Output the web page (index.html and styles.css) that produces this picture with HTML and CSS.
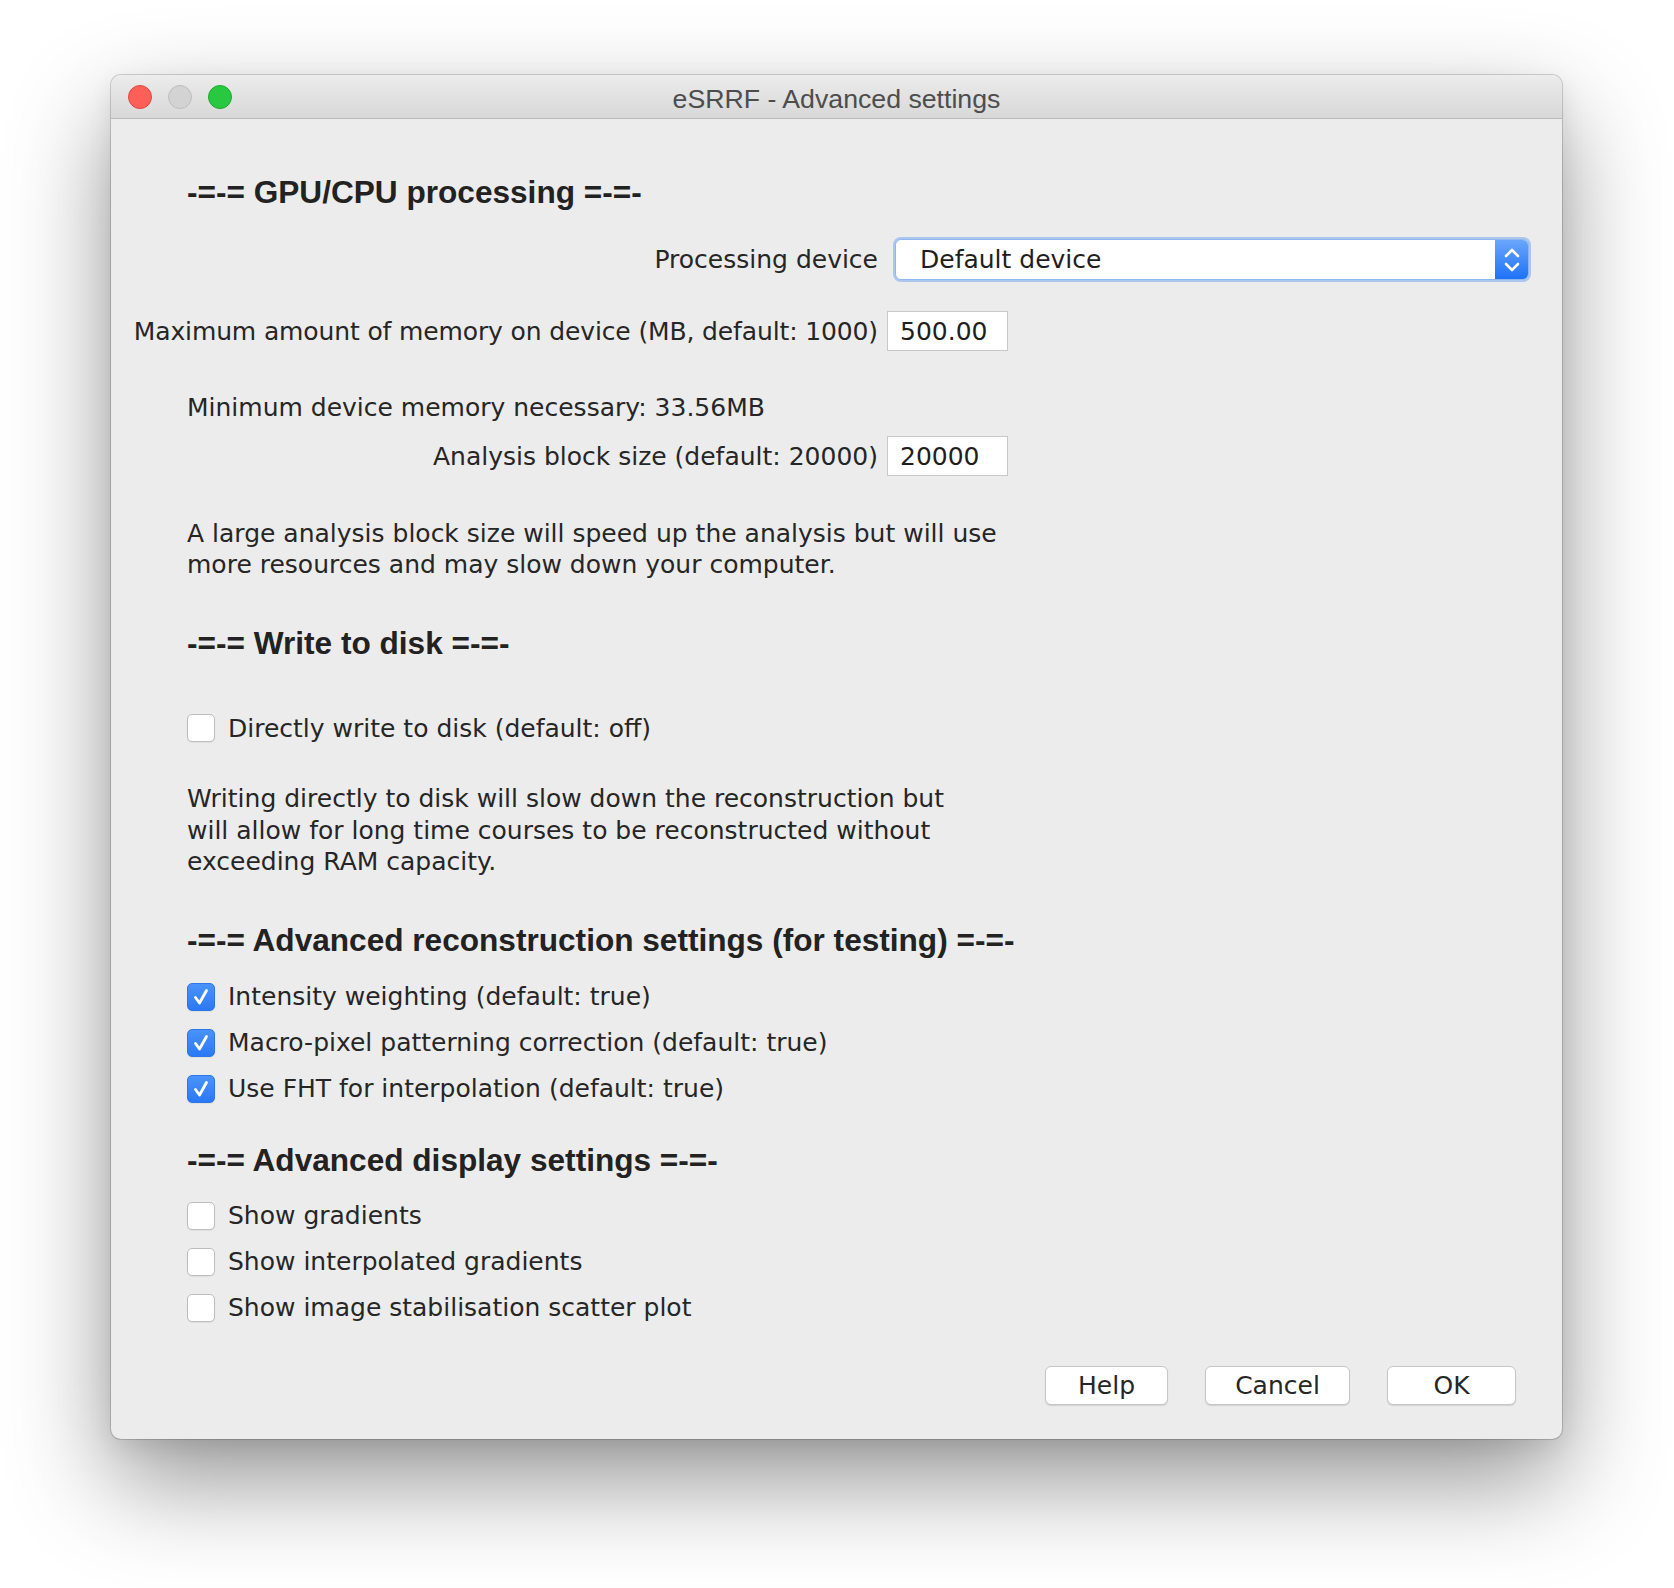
FILE: index.html
```html
<!DOCTYPE html>
<html>
<head>
<meta charset="utf-8">
<title>eSRRF - Advanced settings</title>
<link rel="stylesheet" href="styles.css">
</head>
<body>
<div class="page">
  <div class="window">
    <div class="titlebar">
      <div class="lights">
        <span class="light red"></span>
        <span class="light gray"></span>
        <span class="light green"></span>
      </div>
      <div class="title">eSRRF - Advanced settings</div>
    </div>
    <div class="content">
      <div class="heading h-gpu indent">-=-= GPU/CPU processing =-=-</div>

      <div class="form-row row-device">
        <div class="label"><span>Processing device</span></div>
        <div class="select">
          <span class="select-text">Default device</span>
          <span class="stepper">
            <svg width="20" height="30" viewBox="0 0 20 30">
              <path d="M4 11 L10 5 L16 11" fill="none" stroke="#fff" stroke-width="2.6" stroke-linecap="round" stroke-linejoin="round"/>
              <path d="M4 19 L10 25 L16 19" fill="none" stroke="#fff" stroke-width="2.6" stroke-linecap="round" stroke-linejoin="round"/>
            </svg>
          </span>
        </div>
      </div>

      <div class="form-row row-mem">
        <div class="label label-tight"><span>Maximum amount of memory on device (MB, default: 1000)</span></div>
        <div class="field">500.00</div>
      </div>

      <div class="text indent row-min">Minimum device memory necessary: 33.56MB</div>

      <div class="form-row row-block">
        <div class="label"><span>Analysis block size (default: 20000)</span></div>
        <div class="field">20000</div>
      </div>

      <p class="para indent para-block">A large analysis block size will speed up the analysis but will use<br>more resources and may slow down your computer.</p>

      <div class="heading h-disk indent">-=-= Write to disk =-=-</div>

      <label class="check indent check-disk"><span class="box"></span><span>Directly write to disk (default: off)</span></label>

      <p class="para indent para-disk">Writing directly to disk will slow down the reconstruction but<br>will allow for long time courses to be reconstructed without<br>exceeding RAM capacity.</p>

      <div class="heading h-recon indent">-=-= Advanced reconstruction settings (for testing) =-=-</div>

      <div class="check-list list-recon indent">
        <label class="check"><span class="box on"><svg width="28" height="28" viewBox="0 0 28 28"><path d="M8.5 14.5 L12.5 20 L19.5 7.5" fill="none" stroke="#fff" stroke-width="2.8" stroke-linecap="round" stroke-linejoin="round"/></svg></span><span>Intensity weighting (default: true)</span></label>
        <label class="check"><span class="box on"><svg width="28" height="28" viewBox="0 0 28 28"><path d="M8.5 14.5 L12.5 20 L19.5 7.5" fill="none" stroke="#fff" stroke-width="2.8" stroke-linecap="round" stroke-linejoin="round"/></svg></span><span>Macro-pixel patterning correction (default: true)</span></label>
        <label class="check"><span class="box on"><svg width="28" height="28" viewBox="0 0 28 28"><path d="M8.5 14.5 L12.5 20 L19.5 7.5" fill="none" stroke="#fff" stroke-width="2.8" stroke-linecap="round" stroke-linejoin="round"/></svg></span><span>Use FHT for interpolation (default: true)</span></label>
      </div>

      <div class="heading h-display indent">-=-= Advanced display settings =-=-</div>

      <div class="check-list list-display indent">
        <label class="check"><span class="box"></span><span>Show gradients</span></label>
        <label class="check"><span class="box"></span><span>Show interpolated gradients</span></label>
        <label class="check"><span class="box"></span><span>Show image stabilisation scatter plot</span></label>
      </div>

      <div class="buttons">
        <button class="btn btn-help">Help</button>
        <button class="btn btn-cancel">Cancel</button>
        <button class="btn btn-ok">OK</button>
      </div>
    </div>
  </div>
</div>
</body>
</html>
```

FILE: styles.css
```css
* { box-sizing: border-box; }

html, body {
  margin: 0;
  padding: 0;
  background: #ffffff;
}

body {
  width: 1674px;
  height: 1588px;
  overflow: hidden;
  font-family: "DejaVu Sans", "Lucida Grande", sans-serif;
  color: #262626;
}

.page {
  padding: 75px 0 0 111px;
}

.window {
  width: 1451px;
  height: 1364px;
  background: #ececec;
  border-radius: 10px;
  box-shadow: 0 0 0 1px rgba(0,0,0,0.16), 0 42px 100px rgba(0,0,0,0.42), 0 8px 24px rgba(0,0,0,0.08);
  overflow: hidden;
  display: flex;
  flex-direction: column;
}

.titlebar {
  height: 44px;
  flex: none;
  position: relative;
  background: linear-gradient(#ececec, #d8d8d8);
  border-bottom: 1px solid #b9b9b9;
  display: flex;
  align-items: center;
  justify-content: center;
}

.lights {
  position: absolute;
  left: 17px;
  top: 10px;
  display: flex;
  gap: 16px;
}

.light {
  width: 24px;
  height: 24px;
  border-radius: 50%;
  display: block;
}
.light.red { background: #fe5f57; border: 1px solid #e2463f; }
.light.gray { background: #d3d3d3; border: 1px solid #bdbdbd; }
.light.green { background: #28c840; border: 1px solid #1aab29; }

.title {
  font-family: "Liberation Sans", Arial, sans-serif;
  font-size: 26.7px;
  color: #4d4d4d;
  line-height: 44px;
  padding-top: 4px;
}

.content {
  flex: 1;
  display: flex;
  flex-direction: column;
  align-items: flex-start;
  padding: 53px 46px 0 23px;
  font-size: 25px;
}

.indent { margin-left: 53px; }

.heading {
  font-family: "Liberation Sans", Arial, sans-serif;
  font-weight: bold;
  font-size: 31.6px;
  line-height: 40px;
  height: 40px;
  color: #222;
  white-space: nowrap;
}

.form-row {
  display: flex;
  align-items: center;
}

.label {
  width: 744px;
  display: flex;
  justify-content: flex-end;
  white-space: nowrap;
  line-height: 32px;
  padding-top: 1px;
}

.label-tight { letter-spacing: -0.13px; }

.row-device { height: 41px; margin-top: 27px; }
.row-mem { height: 40px; margin-top: 31px; }
.row-min { line-height: 32px; height: 32px; margin-top: 40px; padding-top: 1px; }
.row-block { height: 40px; margin-top: 13px; }

.select {
  margin-left: 17px;
  width: 634px;
  height: 41px;
  background: #fff;
  border: 1px solid #8fb7ee;
  box-shadow: 0 0 0 2px rgba(120,170,240,0.55);
  border-radius: 6px;
  display: flex;
  align-items: center;
  overflow: hidden;
}

.select-text {
  flex: 1;
  padding-left: 24px;
  line-height: 32px;
  color: #1e1e1e;
}

.stepper {
  width: 33px;
  height: 100%;
  background: linear-gradient(#6aa6fb, #1f72f7);
  display: flex;
  align-items: center;
  justify-content: center;
}

.field {
  margin-left: 9px;
  width: 121px;
  height: 40px;
  background: #fff;
  border: 1px solid #c9c9c9;
  padding-left: 12px;
  line-height: 38px;
  padding-top: 1px;
  color: #1e1e1e;
}

.para {
  margin-top: 41px;
  margin-bottom: 0;
  line-height: 31px;
  padding-top: 1px;
}

.para-block { margin-top: 41px; }
.h-disk { margin-top: 43px; }

.check {
  display: flex;
  align-items: center;
  gap: 13px;
  height: 32px;
  line-height: 32px;
  padding-top: 1px;
}

.check .box { margin-top: -1px; }

.check-disk { margin-top: 49px; }

.para-disk { margin-top: 38px; line-height: 31.5px; }

.h-recon { margin-top: 42px; }

.check-list {
  display: flex;
  flex-direction: column;
  gap: 14px;
}

.list-recon { margin-top: 21px; }
.h-display { margin-top: 35px; }
.list-display { margin-top: 20px; }

.box {
  width: 28px;
  height: 28px;
  flex: none;
  border-radius: 5px;
  background: #fff;
  border: 1px solid #bdbdbd;
  box-shadow: 0 1px 1px rgba(0,0,0,0.06);
  display: block;
}

.box.on {
  background: linear-gradient(#4a93fa, #2a78f5);
  border: 1px solid #2f76e8;
}

.box svg { display: block; margin: -1px; }

.buttons {
  margin-top: 42px;
  align-self: flex-end;
  display: flex;
  gap: 37px;
}

.btn {
  height: 39px;
  background: #fff;
  border: 1px solid #c6c6c6;
  border-radius: 6px;
  box-shadow: 0 1px 1px rgba(0,0,0,0.12);
  font-family: "DejaVu Sans", "Lucida Grande", sans-serif;
  font-size: 25px;
  color: #262626;
  padding: 1px 0 0 0;
  line-height: 35px;
}

.btn-help { width: 123px; }
.btn-cancel { width: 145px; }
.btn-ok { width: 129px; }
```
